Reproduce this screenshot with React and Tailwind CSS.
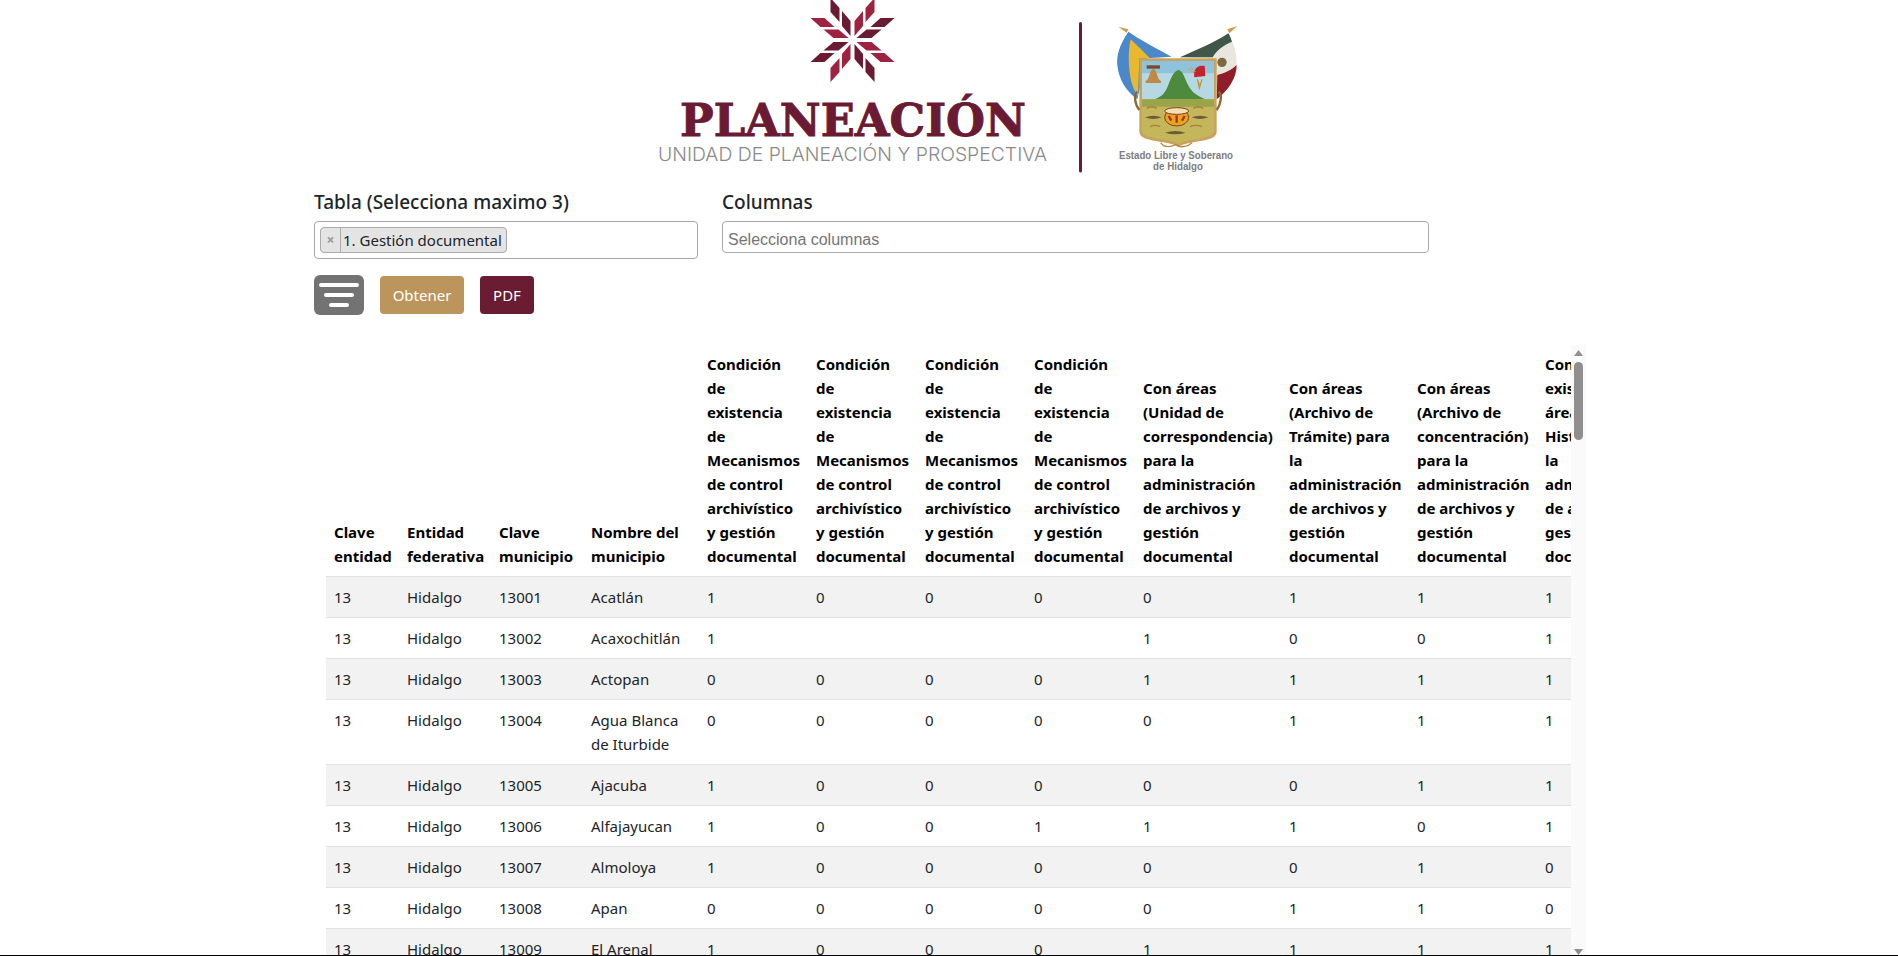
const COLS = [73, 92, 92, 116, 109, 109, 109, 109, 146, 128, 128, 140];
const COND = "Condición de existencia de Mecanismos de control archivístico y gestión documental";
const HEAD = ["Clave entidad","Entidad federativa","Clave municipio","Nombre del municipio",
COND, COND, COND, COND,
"Con áreas (Unidad de correspondencia) para la administración de archivos y gestión documental",
"Con áreas (Archivo de Trámite) para la administración de archivos y gestión documental",
"Con áreas (Archivo de concentración) para la administración de archivos y gestión documental",
"Con|existencia de|áreas|Histórico para|la|administración|de archivos y|gestión|documental"];
const ROWS = [
["13001","Acatlán","1","0","0","0","0","1","1","1"],
["13002","Acaxochitlán","1","","","","1","0","0","1"],
["13003","Actopan","0","0","0","0","1","1","1","1"],
["13004","Agua Blanca de Iturbide","0","0","0","0","0","1","1","1"],
["13005","Ajacuba","1","0","0","0","0","0","1","1"],
["13006","Alfajayucan","1","0","0","1","1","1","0","1"],
["13007","Almoloya","1","0","0","0","0","0","1","0"],
["13008","Apan","0","0","0","0","0","1","1","0"],
["13009","El Arenal","1","0","0","0","1","1","1","1"],
];
function Petal({ rot, flip, fill }) {
  const s = flip ? -1 : 1;
  return (
    <g transform={`rotate(${rot}) scale(${s} 1)`} fill={fill}>
      <polygon points="2,-4 2,-19 10.5,-29 10.5,-14" />
      <polygon points="13,-18 13,-32 22,-42 22,-28" />
    </g>
  );
}
function Star() {
  const c1 = "#6b1a33", c2 = "#9f2241";
  return (
    <g transform="translate(852.5 40)">
      <Petal rot={0} fill={c2} />
      <Petal rot={0} flip fill={c1} />
      <Petal rot={90} fill={c2} />
      <Petal rot={90} flip fill={c1} />
      <Petal rot={180} fill={c2} />
      <Petal rot={180} flip fill={c1} />
      <Petal rot={270} fill={c2} />
      <Petal rot={270} flip fill={c1} />
    </g>
  );
}
function Arms() {
  return (
    <g transform="translate(1100 10) scale(0.33333)" style={{ filter: "blur(0.8px)" }}>
      <path d="M55 50 L85 58 L80 68 Z" fill="#d09a55" />
      <path d="M412 48 L382 58 L388 70 Z" fill="#d09a55" />
      <path d="M85 65 C65 95 48 130 52 165 C56 210 80 245 112 268 L140 145 L215 140 C170 115 120 90 85 65Z" fill="#4a88c9" />
      <path d="M92 88 C84 120 84 175 94 215 C100 235 108 250 114 258 L118 145 L150 145 C130 125 110 105 92 88Z" fill="#e8b92e" />
      <path d="M385 70 C340 100 285 122 240 142 L345 146 L350 268 C385 240 412 195 410 150 C408 120 398 95 385 70Z" fill="#e9e6dd" />
      <path d="M385 70 C340 100 285 122 240 142 L338 142 C350 120 372 105 396 95 C393 86 390 78 385 70Z" fill="#3f5648" />
      <path d="M410 165 C410 205 385 240 350 268 L352 195 C372 190 395 180 410 165Z" fill="#8f1d2a" />
      <circle cx="366" cy="157" r="14" fill="#7d6a45" />
      <path d="M118 145 H350 V365 C350 385 320 390 290 395 C265 399 245 403 235 411 C225 403 205 399 180 395 C150 390 118 385 118 365Z" fill="#c9a25e" />
      <path d="M126 153 H342 V270 H126Z" fill="#b6d8e2" />
      <path d="M126 153 H342 V190 H126Z" fill="#8fc2dc" />
      <path d="M155 270 C185 262 195 250 205 225 C212 205 222 182 236 180 C250 182 255 210 268 232 C280 252 300 262 322 270Z" fill="#4d8a3d" />
      <path d="M126 268 H342 V362 C342 378 318 382 290 387 C265 391 245 395 235 402 C225 395 205 391 180 387 C150 382 126 378 126 362Z" fill="#c4b65b" />
      <path d="M126 268 H342 V290 H126Z" fill="#9aa44a" />
      <path d="M135 322 q25 -10 50 0 q-25 10 -50 0z M275 322 q25 -10 50 0 q-25 10 -50 0z M195 368 q30 -10 62 0 q-32 10 -62 0z" fill="#6e5c38" />
      <path d="M140 295 q15 -8 30 0 M280 295 q15 -8 30 0 M150 350 q15 -8 30 0 M270 350 q18 -8 36 0" stroke="#a8823a" strokeWidth="4" fill="none" />
      <ellipse cx="230" cy="322" rx="36" ry="26" fill="#e0a820" stroke="#8c3b1f" strokeWidth="3" />
      <ellipse cx="230" cy="303" rx="36" ry="10" fill="#f0e2b6" stroke="#8c3b1f" strokeWidth="3" />
      <path d="M206 318 l8 14 M230 316 v22 M254 318 l-8 14" stroke="#c0281f" strokeWidth="7" />
      <path d="M140 166 H180 V176 H140Z" fill="#7a4a28" />
      <path d="M136 214 C150 208 148 178 160 176 C172 178 170 208 184 214 L182 219 H138Z" fill="#c08a45" />
      <path d="M283 202 C278 175 295 163 314 168 L316 198 Z" fill="#c4232c" />
      <path d="M264 175 L283 190 M272 170 L286 186" stroke="#d2a13a" strokeWidth="3" />
      <path d="M292 208 L300 226 L306 208 L298 238Z" fill="#d9a21f" stroke="#c58a1e" strokeWidth="2" />
      <path d="M112 245 C100 255 105 285 118 300 M356 245 C368 255 362 285 350 300" stroke="#8a6a30" strokeWidth="7" fill="none" />
      <path d="M182 398 C190 412 208 412 228 404 C240 414 262 412 276 398" stroke="#b88a3e" strokeWidth="4" fill="none" />
    </g>
  );
}
function Logo() {
  return (
    <svg viewBox="629 0 640 180" className="block mx-auto w-[640px] h-[180px]">
      <Star />
      <text x="680" y="135.5" textLength="346" lengthAdjust="spacingAndGlyphs" fontFamily="'DejaVu Serif',serif" fontWeight="700" fontSize="44" fill="#6b1a33" stroke="#6b1a33" strokeWidth="0.9">PLANEACIÓN</text>
      <text x="658" y="161" textLength="389" lengthAdjust="spacingAndGlyphs" fontFamily="'Inter','Open Sans',sans-serif" fontWeight="300" fontSize="19" fill="#8a8a8a">UNIDAD DE PLANEACIÓN Y PROSPECTIVA</text>
      <rect x="1079" y="22" width="3" height="150.5" rx="1.5" fill="#6b1a33" />
      <Arms />
      <text x="1119" y="159" textLength="114" lengthAdjust="spacingAndGlyphs" fontFamily="'Liberation Sans',sans-serif" fontWeight="700" fontSize="10" fill="#7d7d7d">Estado Libre y Soberano</text>
      <text x="1153" y="170" textLength="50" lengthAdjust="spacingAndGlyphs" fontFamily="'Liberation Sans',sans-serif" fontWeight="700" fontSize="10" fill="#7d7d7d">de Hidalgo</text>
    </svg>
  );
}
function Cell({ children }) {
  return <td className="px-2 py-2 align-top border-t border-[#dee2e6]">{children}</td>;
}
export default function App() {
  return (
    <div className="h-[956px] overflow-hidden bg-white text-[#212529] text-[15px] leading-6 border-b border-black" style={{ fontFamily: "'Noto Sans','Open Sans',sans-serif" }}>
      <Logo />
      <div className="w-[1272px] ml-[314px]">
        <div className="flex gap-6 mt-[9px]">
          <div className="w-[384px]">
            <div className="text-[19px] leading-[27px] font-medium">Tabla (Selecciona maximo 3)</div>
            <div className="mt-[5px] h-[38px] border border-[#aaaaaa] rounded-[4px] px-[5px] pt-[5px]">
              <div className="inline-flex h-[26px] items-center border border-[#aaaaaa] rounded-[4px] bg-[#e4e4e4]">
                <span className="w-[20px] h-full flex items-center justify-center border-r border-[#aaaaaa] text-[#999999] font-bold text-[14px]">×</span>
                <span className="pl-[2px] pr-[4px] text-[15px] leading-none">1. Gestión documental</span>
              </div>
            </div>
          </div>
          <div className="w-[707px]">
            <div className="text-[19px] leading-[27px] font-medium">Columnas</div>
            <div className="mt-[5px] h-[32px] border border-[#aaaaaa] rounded-[4px] px-[5px] pt-[5px] flex items-center text-[16px] text-[#757575]" style={{ fontFamily: "'Liberation Sans',sans-serif" }}>Selecciona columnas</div>
          </div>
        </div>
        <div className="flex items-center mt-[16px] h-[40px]">
          <button className="w-[50px] h-[40px] rounded-[6px] bg-[#737373] flex flex-col items-center justify-center gap-[6px]">
            <span className="block w-[40px] h-[4px] rounded-full bg-white" />
            <span className="block w-[30px] h-[4px] rounded-full bg-white" />
            <span className="block w-[20px] h-[4px] rounded-full bg-white" />
          </button>
          <button className="ml-[16px] w-[84px] h-[38px] rounded-[4px] bg-[#bc955c] text-white">Obtener</button>
          <button className="ml-[16px] w-[54px] h-[38px] rounded-[4px] bg-[#691c32] text-white">PDF</button>
        </div>
        <div className="flex mt-[29px] h-[611px]">
          <div className="ml-[12px] w-[1245px] overflow-hidden">
            <table className="table-fixed border-collapse w-[1351px]">
              <colgroup>
                {COLS.map((w, i) => <col key={i} style={{ width: w }} />)}
              </colgroup>
              <thead>
                <tr>
                  {HEAD.map((h, i) => (
                    <th key={i} className="px-2 py-2 align-bottom text-left font-bold text-[#000000]">
                      {h.includes("|") ? h.split("|").map((l, k) => <div key={k}>{l}</div>) : h}
                    </th>
                  ))}
                </tr>
              </thead>
              <tbody>
                {ROWS.map((r, i) => (
                  <tr key={i} className={i % 2 === 0 ? "bg-[#f2f2f2]" : "bg-white"}>
                    <Cell>13</Cell>
                    <Cell>Hidalgo</Cell>
                    {r.map((v, j) => <Cell key={j}>{v}</Cell>)}
                  </tr>
                ))}
              </tbody>
            </table>
          </div>
          <div className="w-[15px] mt-[1px] bg-[#fafafa] flex flex-col items-center">
            <svg width="9" height="6" viewBox="0 0 9 6" className="mt-[5px] shrink-0"><path d="M4.5 0 L9 6 H0Z" fill="#8f8f8f" /></svg>
            <div className="mt-[6px] w-[9px] h-[78px] rounded-full bg-[#8f8f8f]" />
            <svg width="9" height="6" viewBox="0 0 9 6" className="mt-auto shrink-0"><path d="M4.5 6 L9 0 H0Z" fill="#8f8f8f" /></svg>
          </div>
        </div>
      </div>
    </div>
  );
}
